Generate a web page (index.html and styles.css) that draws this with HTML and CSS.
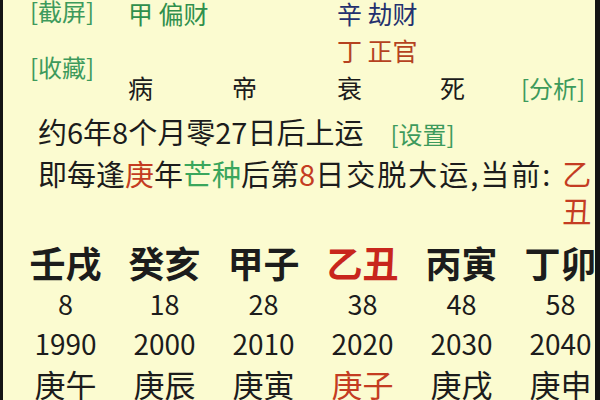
FILE: index.html
```html
<!DOCTYPE html>
<html lang="zh">
<head>
<meta charset="utf-8">
<link rel="stylesheet" href="styles.css">
</head>
<body>
<div class="screen">
  <div class="top">
    <div class="tools">
      <span class="btn">[截屏]</span>
      <span class="btn btn-fav">[收藏]</span>
    </div>
    <div class="cell c2 r1 green nowrap">甲 偏财</div>
    <div class="cell c4 r1 navy nowrap">辛 劫财</div>
    <div class="cell c4 r2 brown nowrap">丁 正官</div>
    <div class="cell c2 r3">病</div>
    <div class="cell c3 r3">帝</div>
    <div class="cell c4 r3">衰</div>
    <div class="cell c5 r3">死</div>
    <div class="cell c6 r3"><span class="btn">[分析]</span></div>
  </div>

  <div class="line4">约6年8个月零27日后上运<span class="btn btn-set">[设置]</span></div>

  <div class="line5">
    <div class="l5text">即每逢<span class="red">庚</span>年<span class="green2">芒种</span>后第<span class="red">8</span><span class="wide">日交脱大运,当前:</span></div>
    <div class="cur red">乙丑</div>
  </div>

  <div class="dayun">
    <div class="gz">壬戌</div>
    <div class="gz">癸亥</div>
    <div class="gz">甲子</div>
    <div class="gz red-b">乙丑</div>
    <div class="gz">丙寅</div>
    <div class="gz">丁卯</div>

    <div class="age">8</div>
    <div class="age">18</div>
    <div class="age">28</div>
    <div class="age">38</div>
    <div class="age">48</div>
    <div class="age">58</div>

    <div class="year">1990</div>
    <div class="year">2000</div>
    <div class="year">2010</div>
    <div class="year">2020</div>
    <div class="year">2030</div>
    <div class="year">2040</div>

    <div class="ln">庚午</div>
    <div class="ln">庚辰</div>
    <div class="ln">庚寅</div>
    <div class="ln red">庚子</div>
    <div class="ln">庚戌</div>
    <div class="ln">庚申</div>
  </div>
</div>
</body>
</html>
```

FILE: styles.css
```css
html, body {
  margin: 0;
  padding: 0;
  width: 600px;
  height: 400px;
  overflow: hidden;
  background: #111;
}

.screen {
  box-sizing: border-box;
  width: 600px;
  height: 400px;
  overflow: hidden;
  background: #fbfbd0;
  border-left: 3px solid #141414;
  border-right: 5px solid #141414;
  font-family: "Noto Sans CJK SC", "Noto Sans", sans-serif;
  color: #1c1c1c;
}

.top {
  display: grid;
  grid-template-columns: 125px 104px 105px 103px 81px 74px;
  grid-template-rows: 26px 26px 26px;
  row-gap: 11px;
  height: 101px;
}

.tools {
  grid-column: 1;
  grid-row: 1 / 4;
  display: flex;
  flex-direction: column;
  align-items: flex-start;
  padding-left: 27px;
}

.btn {
  font-size: 24px;
  line-height: 22px;
  color: #3d9a5c;
}

.btn-fav {
  margin-top: 34px;
}

.cell {
  font-size: 25px;
  line-height: 26px;
}

.nowrap { white-space: nowrap; }

.c2 { grid-column: 2; }
.c3 { grid-column: 3; }
.c4 { grid-column: 4; }
.c5 { grid-column: 5; }
.c6 { grid-column: 6; }
.r1 { grid-row: 1; }
.r2 { grid-row: 2; }
.r3 { grid-row: 3; }

.green { color: #2f8f4c; }
.navy { color: #23306e; }
.brown { color: #b5421f; }
.red { color: #c43c22; }
.green2 { color: #3aa65c; }

.line4 {
  padding-left: 35px;
  margin-top: 10px;
  font-size: 29px;
  line-height: 40px;
  white-space: nowrap;
}

.btn-set {
  margin-left: 27px;
}

.line5 {
  display: flex;
  align-items: flex-start;
  padding-left: 35px;
  margin-top: 4px;
  font-size: 29px;
  line-height: 37px;
}

.l5text {
  white-space: nowrap;
}

.wide {
  letter-spacing: 2px;
}

.cur {
  width: 1em;
  margin-left: 10px;
  word-break: break-all;
}

.dayun {
  display: grid;
  grid-template-columns: repeat(6, 99px);
  padding-left: 13px;
  margin-top: 11px;
  text-align: center;
}

.gz {
  font-size: 36px;
  font-weight: bold;
  line-height: 44px;
  white-space: nowrap;
}

.red-b { color: #c8261c; }

.age {
  font-size: 27px;
  line-height: 40px;
}

.year {
  font-size: 28px;
  line-height: 38px;
}

.ln {
  font-size: 31px;
  line-height: 44px;
  white-space: nowrap;
}
```
